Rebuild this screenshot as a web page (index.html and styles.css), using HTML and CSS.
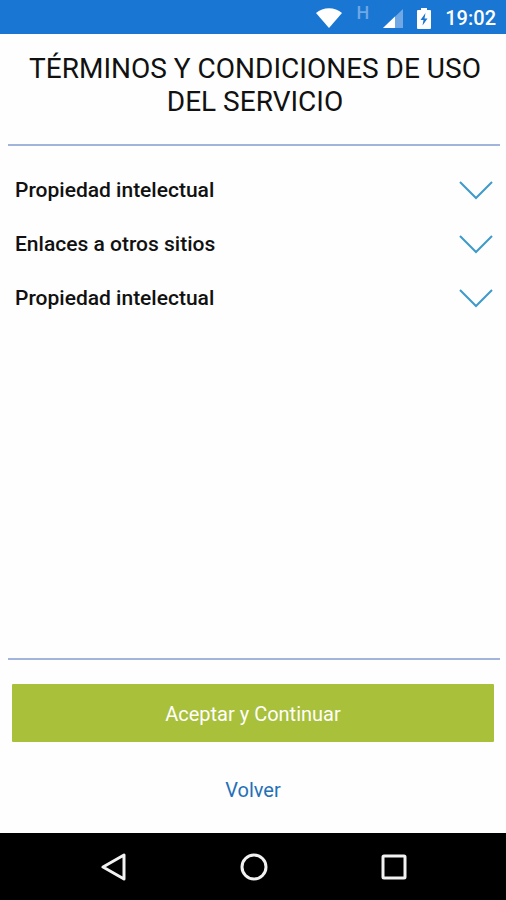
FILE: index.html
```html
<!DOCTYPE html>
<html lang="es">
<head>
<meta charset="utf-8">
<meta name="viewport" content="width=device-width, initial-scale=1">
<title>Términos y condiciones</title>
<link rel="stylesheet" href="styles.css">
</head>
<body>
<header class="status">
  <svg width="26" height="20" viewBox="0 0 26 20" aria-hidden="true"><path d="M0 5C7-1.500 19-1.500 26 5L13 20Z" fill="#fff"/></svg>
  <span class="network">H</span>
  <svg width="20" height="19" viewBox="0 0 20 19" aria-hidden="true"><path d="M20 0V19H0Z" fill="#6fa8e4"/><path d="M12 7.600V19H0Z" fill="#fff"/></svg>
  <svg width="14" height="21" viewBox="0 0 14 21" aria-hidden="true"><path d="M4 0H10V2H13Q14 2 14 3V20Q14 21 13 21H1Q0 21 0 20V3Q0 2 1 2H4Z" fill="#fff"/><path d="M8.500 5L3.500 12H6.500L5.500 17.500L10.500 10.500H7.500Z" fill="#1976d2"/></svg>
  <time class="clock">19:02</time>
</header>
<main class="page">
  <h1 class="title">TÉRMINOS Y CONDICIONES DE USO DEL SERVICIO</h1>
  <section class="sections">
    <button class="section" type="button" aria-expanded="false">Propiedad intelectual
      <svg class="chevron" width="34" height="20" viewBox="0 0 34 20" aria-hidden="true"><path d="M1 2L17 18L33 2"/></svg></button>
    <button class="section" type="button" aria-expanded="false">Enlaces a otros sitios
      <svg class="chevron" width="34" height="20" viewBox="0 0 34 20" aria-hidden="true"><path d="M1 2L17 18L33 2"/></svg></button>
    <button class="section" type="button" aria-expanded="false">Propiedad intelectual
      <svg class="chevron" width="34" height="20" viewBox="0 0 34 20" aria-hidden="true"><path d="M1 2L17 18L33 2"/></svg></button>
  </section>
  <div class="actions">
    <button class="accept" type="button">Aceptar y Continuar</button>
    <a class="back" href="#">Volver</a>
  </div>
</main>
<nav class="navbar">
  <button class="key" type="button" aria-label="Atrás"><svg width="28" height="28" viewBox="0 0 28 28"><path d="M24 2V26L3 14Z"/></svg></button>
  <button class="key" type="button" aria-label="Inicio"><svg width="28" height="28" viewBox="0 0 28 28"><circle cx="14" cy="14" r="12"/></svg></button>
  <button class="key" type="button" aria-label="Recientes"><svg width="28" height="28" viewBox="0 0 28 28"><rect x="3" y="3" width="22" height="22" rx="1"/></svg></button>
</nav>
</body>
</html>
```
FILE: styles.css
```css
* {
  box-sizing: border-box;
}

body {
  display: flex;
  flex-direction: column;
  min-height: 100vh;
  margin: 0;
  background: #fefefe;
  color: #111;
  font-family: Roboto, "Liberation Sans", sans-serif;
  font-size: 20px;
}

button {
  border: 0;
  font: inherit;
  cursor: pointer;
}

.status {
  display: flex;
  align-items: center;
  justify-content: flex-end;
  gap: 14px;
  height: 34px;
  padding: 2px 10px 0 0;
  background: #1976d2;
  color: #fff;
}

.network {
  align-self: flex-start;
  color: #6fa8e4;
  font-size: 18px;
  font-weight: 500;
  line-height: 22px;
}

.clock {
  font-weight: 500;
}

.page {
  display: flex;
  flex: 1;
  flex-direction: column;
  padding: 0 6px 0 8px;
}

.title {
  margin: 0;
  padding: 18px 8px 26px 10px;
  border-bottom: 2px solid #a3b4dc;
  font-size: 28px;
  font-weight: 400;
  line-height: 33px;
  text-align: center;
}

.sections {
  flex: 1;
  padding-top: 17px;
}

.section {
  display: flex;
  align-items: center;
  justify-content: space-between;
  width: 100%;
  height: 54px;
  padding: 0 7px;
  background: none;
  color: #111;
  font-size: 21px;
  font-weight: 500;
  text-align: left;
}

.chevron {
  fill: none;
  stroke: #3d9aca;
  stroke-width: 2;
}

.actions {
  display: flex;
  flex-direction: column;
  align-items: center;
  padding: 24px 6px 27px 4px;
  border-top: 2px solid #a3b4dc;
}

.accept {
  width: 100%;
  height: 58px;
  padding: 2px 0 0;
  border-radius: 1px;
  background: #a9c03a;
  color: #fff;
}

.back {
  margin-top: 32px;
  color: #2470b8;
  line-height: 32px;
  text-decoration: none;
}

.navbar {
  display: flex;
  justify-content: center;
  gap: 112px;
  padding: 20px 0 19px 2px;
  background: #000;
}

.key {
  display: flex;
  padding: 0;
  background: none;
}

.key svg {
  fill: none;
  stroke: #f2f2f2;
  stroke-width: 3;
  stroke-linejoin: round;
}
```
